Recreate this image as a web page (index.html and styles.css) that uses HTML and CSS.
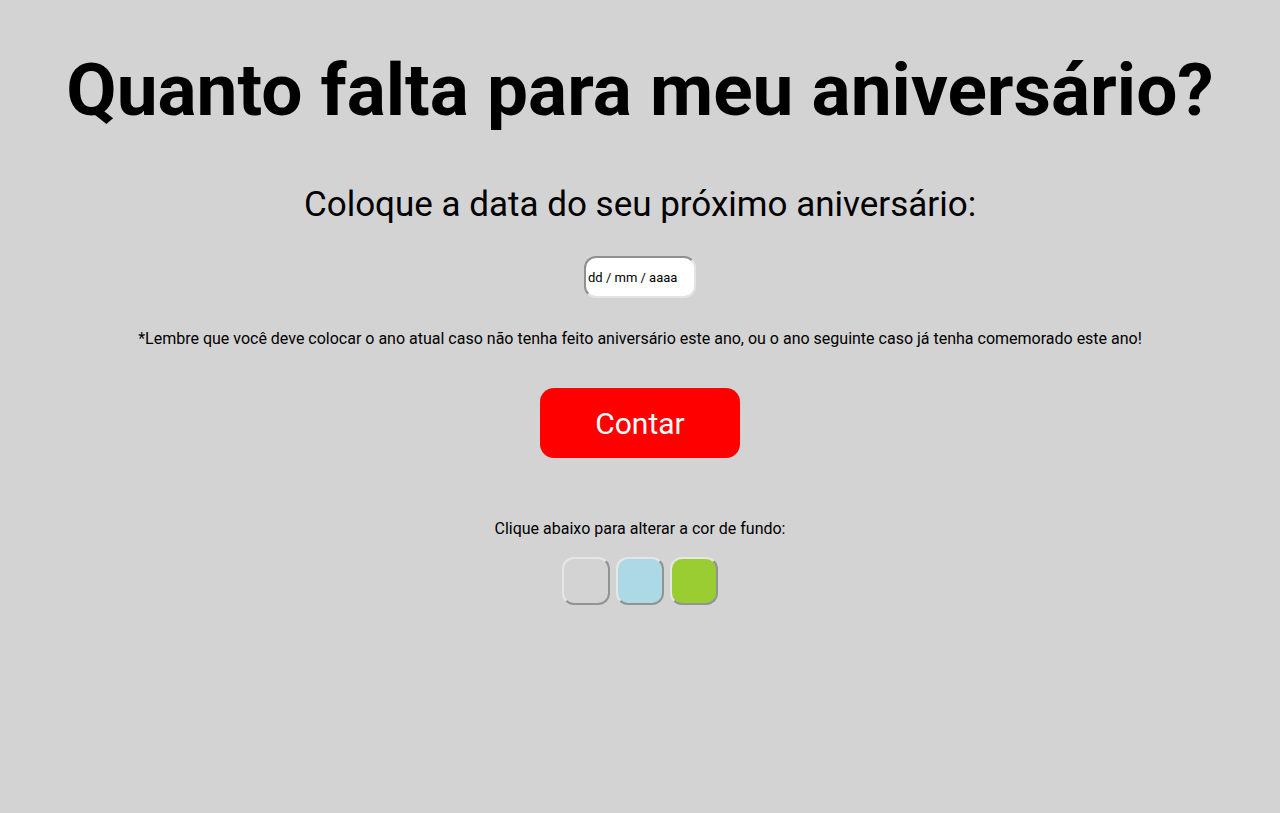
FILE: index.html
```html
<!DOCTYPE html>
<html lang="pt-BR">
<head>
<meta charset="utf-8">
<title>Quanto falta para meu aniversário?</title>
<link rel="stylesheet" href="styles.css">
</head>
<body>
<main class="page">
  <h1 class="title">Quanto falta para meu aniversário?</h1>
  <h2 class="subtitle">Coloque a data do seu próximo aniversário:</h2>
  <input class="date-input" type="text" placeholder="dd / mm / aaaa">
  <p class="note">*Lembre que você deve colocar o ano atual caso não tenha feito aniversário este ano, ou o ano seguinte caso já tenha comemorado este ano!</p>
  <button class="count-btn" type="button">Contar</button>
  <p class="bg-label">Clique abaixo para alterar a cor de fundo:</p>
  <div class="swatches">
    <button class="swatch swatch-grey" type="button" aria-label="cinza"></button>
    <button class="swatch swatch-blue" type="button" aria-label="azul"></button>
    <button class="swatch swatch-green" type="button" aria-label="verde"></button>
  </div>
</main>
</body>
</html>
```
FILE: styles.css
```css
html, body {
  margin: 0;
  padding: 0;
}
body {
  background: #d3d3d3;
  font-family: Roboto, "Liberation Sans", sans-serif;
  color: #000;
}
.page {
  display: flex;
  flex-direction: column;
  align-items: center;
  text-align: center;
  padding-top: 47px;
}
.title {
  margin: 0;
  font-size: 73px;
  font-weight: 700;
  line-height: 86px;
}
.subtitle {
  margin: 51px 0 0;
  font-size: 35px;
  font-weight: 400;
  line-height: 41px;
}
.date-input {
  margin-top: 31px;
  box-sizing: border-box;
  width: 112px;
  height: 42px;
  padding: 0 0 0 2px;
  border: 2px solid #e4e4e4;
  border-top-color: #8f8f8f;
  border-left-color: #8f8f8f;
  border-radius: 12px;
  background: #fff;
  font-family: Roboto, "Liberation Sans", sans-serif;
  font-size: 13px;
  color: #000;
  outline: none;
}
.date-input::placeholder {
  color: #000;
  opacity: 1;
}
.note {
  margin: 31px 0 0;
  font-size: 16px;
  line-height: 19px;
}
.count-btn {
  margin-top: 40px;
  width: 200px;
  height: 70px;
  border: none;
  border-radius: 14px;
  background: #ff0000;
  color: #fff;
  font-family: Roboto, "Liberation Sans", sans-serif;
  font-size: 30px;
}
.bg-label {
  margin: 61px 0 0;
  font-size: 16px;
  line-height: 19px;
}
.swatches {
  display: flex;
  gap: 6px;
  margin-top: 19px;
}
.swatch {
  box-sizing: border-box;
  width: 48px;
  height: 48px;
  padding: 0;
  border: 2px solid #e6e6e6;
  border-right-color: #939393;
  border-bottom-color: #939393;
  border-radius: 12px;
}
.swatch-grey { background: #d3d3d3; }
.swatch-blue { background: #add8e6; }
.swatch-green { background: #9acd32; }
```
